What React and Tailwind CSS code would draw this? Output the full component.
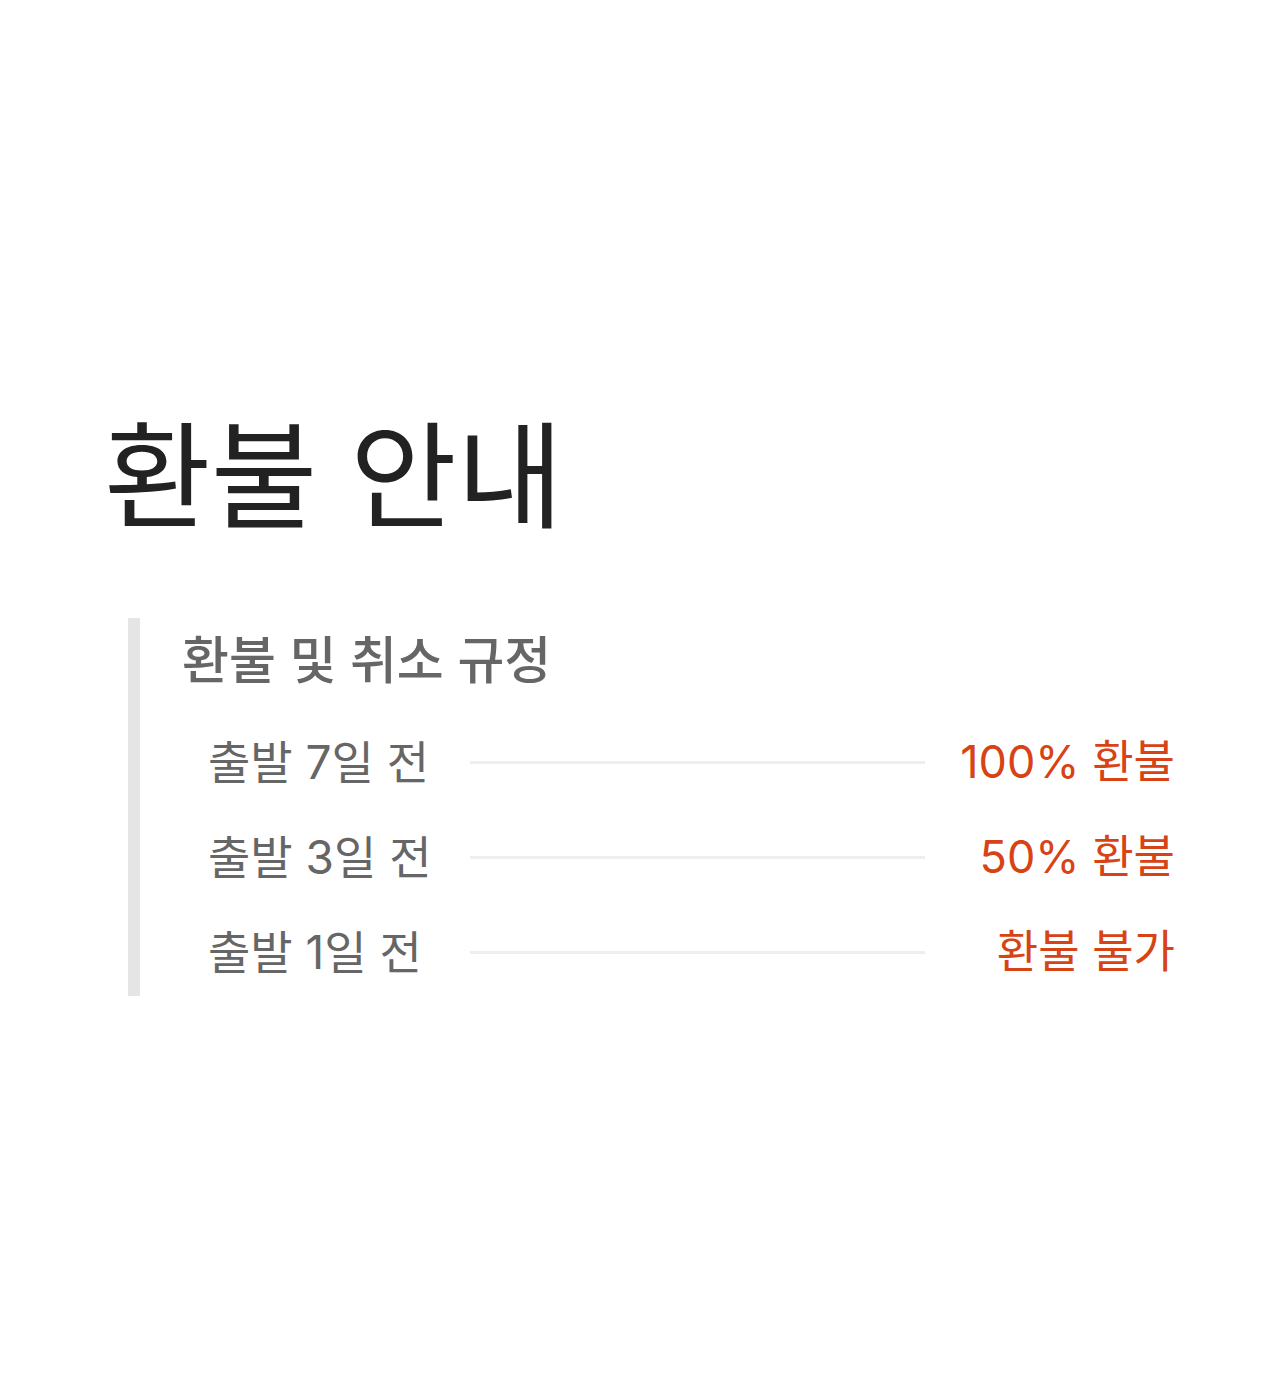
export default function App() {
  const rows = [
    { label: "출발 7일 전", value: "100% 환불" },
    { label: "출발 3일 전", value: "50% 환불" },
    { label: "출발 1일 전", value: "환불 불가" },
  ];
  return (
    <div
      className="min-h-[1398px] bg-white pt-[419px] pl-[104px] pr-[105px]"
      style={{ fontFamily: 'Inter, "Noto Sans CJK KR", sans-serif' }}
    >
      <h1 className="text-[116px] leading-[116px] font-normal text-[#222222]">환불 안내</h1>
      <div className="mt-[83px] ml-[24px] border-l-[12px] border-[#e5e5e5] pt-[13px] pb-[16px] pl-[42px]">
        <h2 className="h-[60px] flex items-center text-[51px] font-medium text-[#666666]">환불 및 취소 규정</h2>
        <div className="mt-[43px] flex flex-col gap-[39px]">
          {rows.map((r) => (
            <div key={r.label} className="h-[56px] flex items-center">
              <div className="w-[288px] pl-[26px] text-[46px] text-[#666666]">{r.label}</div>
              <div className="flex-1 h-[3px] bg-[#eeeeee]" />
              <div className="w-[250px] text-right text-[45px] text-[#d84315]">{r.value}</div>
            </div>
          ))}
        </div>
      </div>
    </div>
  );
}
